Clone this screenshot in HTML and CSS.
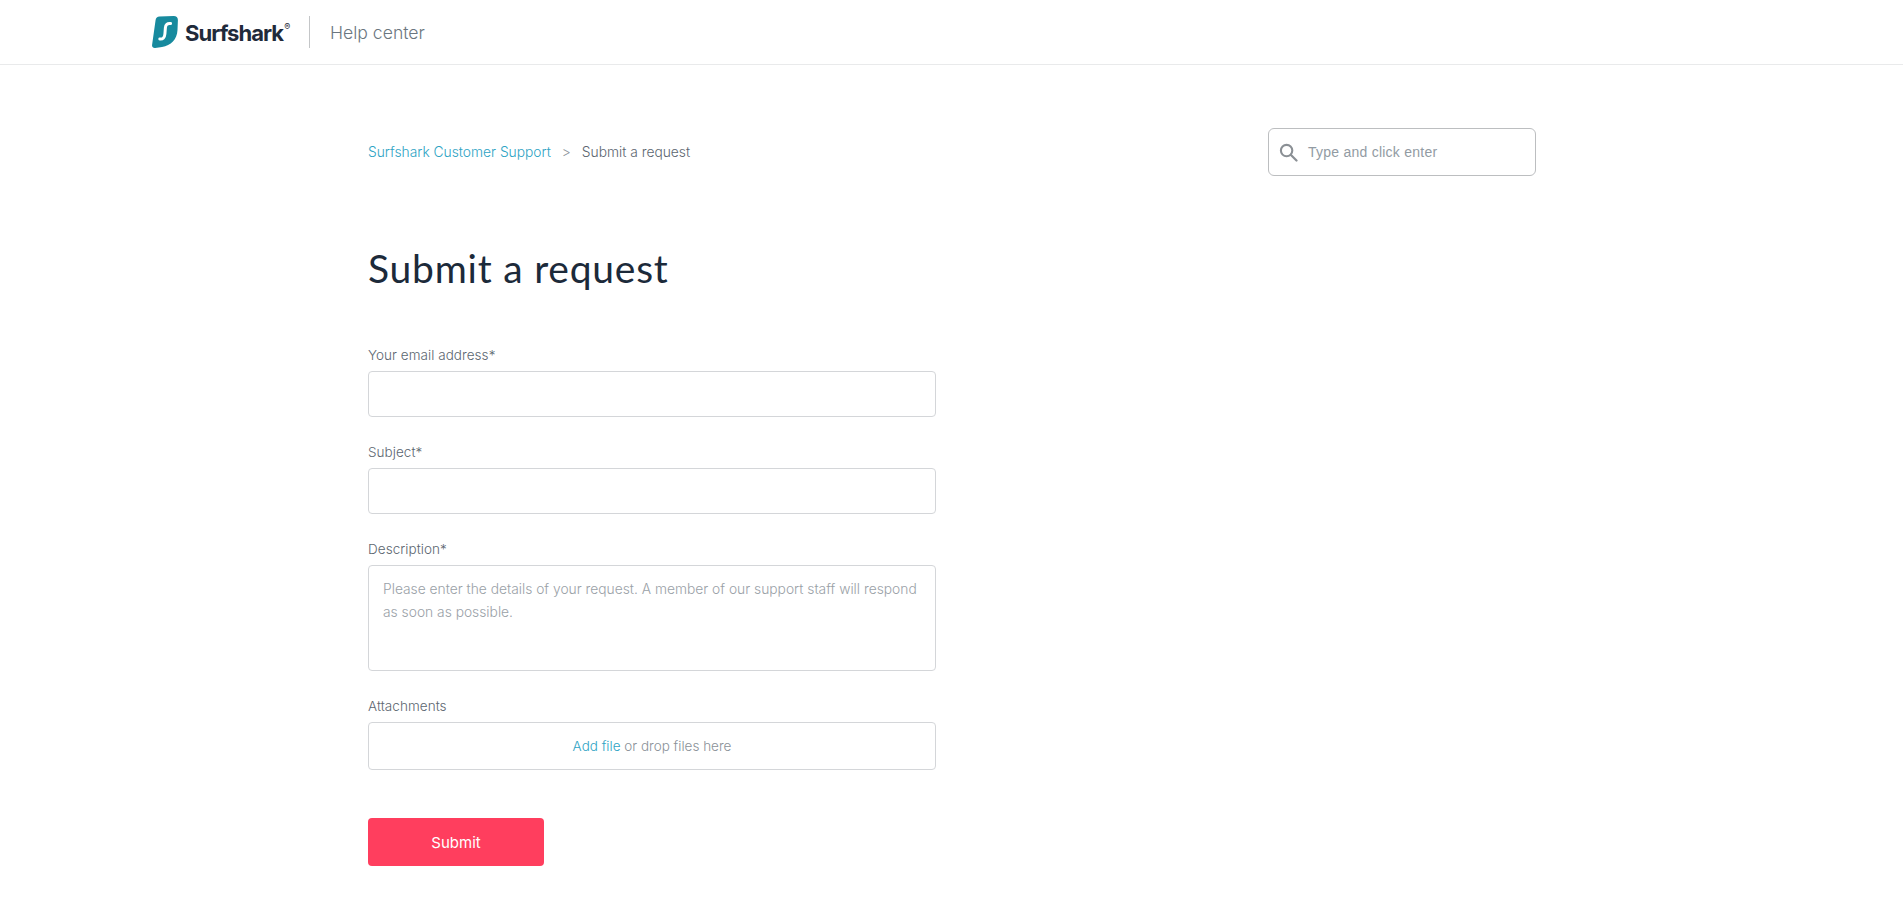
FILE: index.html
```html
<!DOCTYPE html>
<html lang="en">
<head>
<meta charset="utf-8">
<title>Submit a request</title>
<link rel="stylesheet" href="styles.css">
</head>
<body>
<header class="site-header">
  <a class="brand" href="#">
    <svg class="brand-mark" viewBox="0 0 26 32" width="26" height="32" aria-hidden="true">
      <path fill="#178a9e" d="M7.5 0.6 21.5 0.1C24.3 0 26 1.6 25.9 4.2L25.5 14C25 23.5 19 29.6 10 31L3.2 31.9C1 32.1 -0.2 30.8 0.1 28.8L3.6 4C3.9 1.9 5.3 0.7 7.5 0.6Z"/>
      <path fill="none" stroke="#fff" stroke-width="3" stroke-linecap="round" d="M18.6 7.6C15.2 7 13.6 8.8 13.4 11.6L12.9 18C12.6 21.6 11 23.4 7.8 23"/>
    </svg>
    <span class="brand-name">Surfshark</span><span class="brand-reg">®</span>
  </a>
  <span class="header-divider"></span>
  <a class="header-title" href="#">Help center</a>
</header>
<main class="page">
  <div class="sub-nav">
    <nav class="breadcrumbs">
      <a href="#">Surfshark Customer Support</a>
      <span class="crumb-sep">&gt;</span>
      <span class="crumb-current">Submit a request</span>
    </nav>
    <form class="search">
      <svg class="search-icon" viewBox="0 0 20 20" width="19" height="19" aria-hidden="true">
        <circle cx="8" cy="8" r="6" fill="none" stroke="#8b9095" stroke-width="2.2"/>
        <path d="M12.6 12.6 18.4 18.4" stroke="#8b9095" stroke-width="2.4" stroke-linecap="round"/>
      </svg>
      <span class="search-placeholder">Type and click enter</span>
    </form>
  </div>
  <h1 class="page-title">Submit a request</h1>
  <form class="request-form">
    <div class="field">
      <label class="field-label">Your email address*</label>
      <div class="field-box field-input"></div>
    </div>
    <div class="field">
      <label class="field-label">Subject*</label>
      <div class="field-box field-input"></div>
    </div>
    <div class="field">
      <label class="field-label">Description*</label>
      <div class="field-box field-textarea">Please enter the details of your request. A member of our support staff will respond as soon as possible.</div>
    </div>
    <div class="field">
      <label class="field-label">Attachments</label>
      <div class="field-box field-upload"><a href="#">Add file</a>&nbsp;or drop files here</div>
    </div>
    <button class="submit" type="button">Submit</button>
  </form>
</main>
</body>
</html>
```
FILE: styles.css
```css
* { box-sizing: border-box; }
html, body { margin: 0; padding: 0; background: #fff; }
body { font-family: Inter, "Liberation Sans", sans-serif; font-weight: 300; color: #5c6670; height: 922px; overflow: hidden; }
a { text-decoration: none; color: #2ea3c4; }

.site-header { height: 65px; border-bottom: 1px solid #e9eaeb; padding: 16px 0 0 152px; display: flex; align-items: flex-start; }
.brand { display: flex; align-items: center; height: 32px; width: 139px; }
.brand-mark { flex: none; }
.brand-name { font-weight: 700; font-size: 22px; line-height: 34px; padding-top: 1px; letter-spacing: -0.95px; color: #1f2a3a; margin-left: 7px; }
.brand-reg { font-size: 9px; font-weight: 400; color: #1f2a3a; align-self: flex-start; margin: 5px 0 0 1px; }
.header-divider { width: 1px; height: 32px; background: #c4c6c8; margin: 0 20px 0 18px; }
.header-title { font-size: 17.6px; line-height: 34px; color: #6b7680; }

.page { width: 1168px; margin-left: 368px; }
.sub-nav { display: flex; justify-content: space-between; align-items: center; padding-top: 63px; }
.breadcrumbs { font-size: 13.8px; display: flex; gap: 11px; }
.crumb-sep { color: #8a929a; }
.crumb-current { color: #5c6670; }
.search { width: 268px; height: 48px; border: 1px solid #bcbec0; border-radius: 6px; display: flex; align-items: center; padding-left: 10px; gap: 10px; }
.search-icon { flex: none; }
.search-placeholder { font-family: "Liberation Sans", sans-serif; font-weight: 400; font-size: 14px; letter-spacing: 0.24px; color: #929ba3; }

.page-title { font-family: Lato, sans-serif; font-size: 39px; font-weight: 400; line-height: 46px; letter-spacing: 0.78px; color: #1c2a3a; margin: 69px 0 0; }

.request-form { width: 568px; margin-top: 54px; }
.field { margin-bottom: 25px; }
.field-label { display: block; font-size: 13.5px; line-height: 20px; letter-spacing: 0.05px; margin-bottom: 6px; color: #5c6670; }
.field-box { border: 1px solid #d4d6d9; border-radius: 4px; }
.field-input { height: 46px; }
.field-textarea { height: 106px; padding: 12px 14px; font-size: 13.8px; line-height: 23px; color: #9aa1a7; }
.field-upload { height: 48px; display: flex; justify-content: center; align-items: center; font-size: 13.5px; color: #8a9198; }
.submit { display: block; width: 176px; height: 48px; margin-top: 48px; border: 0; border-radius: 4px; background: #ff3e5e; color: #fff; font-family: Inter, sans-serif; font-weight: 400; font-size: 15px; }
```
